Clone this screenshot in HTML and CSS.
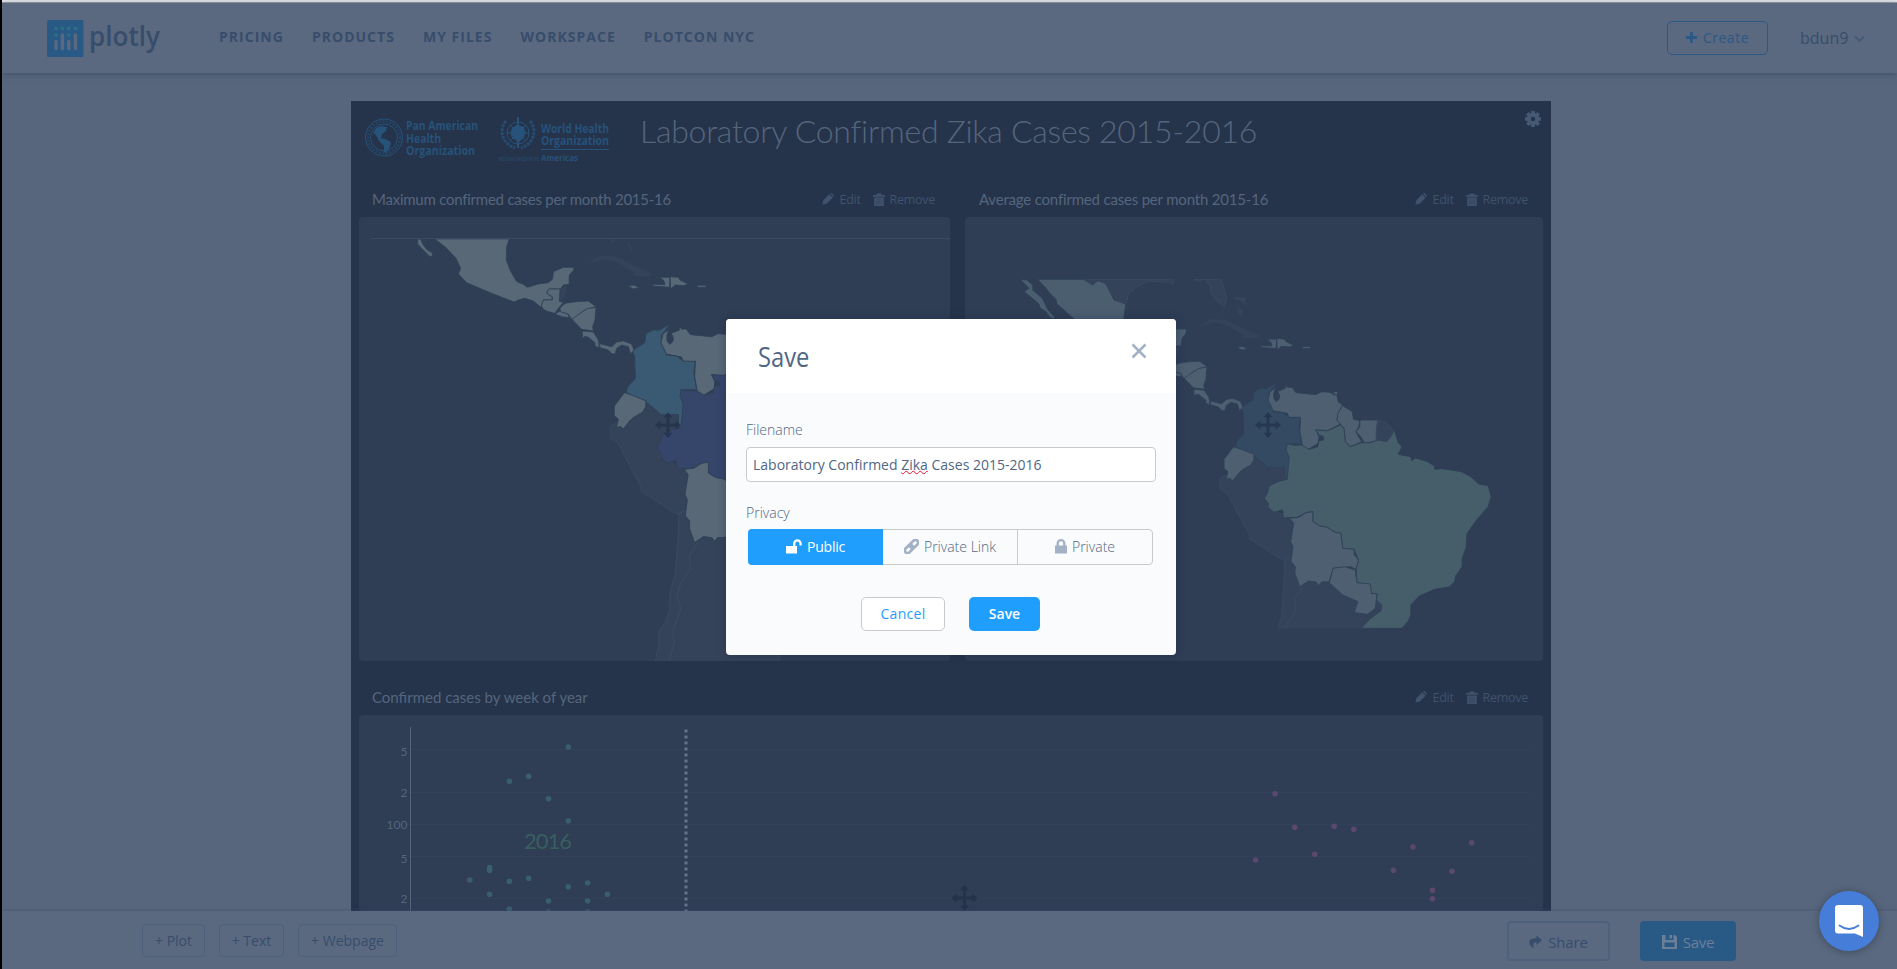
FILE: index.html
```html
<!DOCTYPE html>
<html lang="en">
<head>
<meta charset="utf-8">
<title>plotly dashboard</title>
<link rel="stylesheet" href="styles.css">
</head>
<body>
<svg width="0" height="0" class="defs" aria-hidden="true">
  <defs>
    <symbol id="pencil" viewBox="0 0 12 12"><path d="M.4 11.6 1.2 7.6 7.1 1.3 10.7 4.7 4.6 10.8ZM7.9.6Q9-.5 10.2.6L11.3 1.7Q12.3 2.8 11.3 3.9Z"/></symbol>
    <symbol id="trash" viewBox="0 0 12 13"><path d="M0 2h3.6V.6h4.8V2H12v1.8H0ZM1.2 4.6h9.6V13H1.2Z"/><path d="M3.7 5.8v6M6 5.8v6M8.3 5.8v6" class="slot"/></symbol>
    <symbol id="move" viewBox="0 0 26 26"><path d="M13 0l4.4 5.2h-2.9v6.3h6.3V8.6L26 13l-5.2 4.4v-2.9h-6.3v6.3h2.9L13 26l-4.4-5.2h2.9v-6.3H5.2v2.9L0 13l5.2-4.4v2.9h6.3V5.2H8.6Z"/></symbol>
    <g id="central">
      <path class="land" d="M632 205L650 195 645 232 630 243ZM710 132L750 107 800 110 850 135 910 162 890 170 845 168 855 158 830 145 800 125 765 118ZM775 57L800 60 790 70ZM832 70L838 69 848 88 848 97 840 92Z"/>
      <path class="rest" d="M597 207L630 207 628 244 640 247 628 262 614 280 592 274 580 268 574 258 580 240 607 240 607 230 590 220Z"/>
      <path class="rest" d="M630 264L645 250 680 245 715 243 738 260 710 268 690 280 672 296 664 297 655 282 632 277Z"/>
      <path class="rest" d="M614 282L628 274 655 283 657 293 635 290Z"/>
      <path class="rest" d="M666 298L690 280 712 266 738 262 735 300 728 320 730 333 695 328Z"/>
      <path class="rest" d="M697 333L730 336 745 360 748 383 735 378 735 368 715 352 706 349 697 355Z"/>
      <path class="rest" d="M748 362L752 372 785 380 800 366 820 363 845 372 852 390 842 402 835 380 815 375 800 385 795 402 785 401 775 390 750 383Z"/>
      <path class="rest" d="M835 198L850 195 868 202 850 207ZM930 172L960 172 958 202 910 198 908 193 945 194 942 182ZM960 170L985 172 990 180 1015 192 1000 197 975 195 962 207ZM1042 196h26v6h-26Z"/>
    </g>
    <path id="mexico" class="mx" d="M255 57L478 57 470 80 469 120 480 150 500 185 518 192 533 202 565 192 595 188 608 177 610 155 640 142 672 142 670 152 658 165 657 193 640 195 632 207 597 207 590 218 607 232 605 240 580 240 573 262 550 243 525 235 505 240 492 246 425 220 385 203 350 188 325 162 332 145 318 115 290 85ZM203 57L212 58 220 75 230 88 248 100 246 110 238 108 210 80 203 72Z"/>
    <g id="south">
      <path class="land coast" d="M695 765L680 775 680 808 700 822 735 900 755 940 757 957 830 1010 848 1022 849 1060 840 1190 827 1242 826 1290 815 1325 799 1352 800 1380 790 1440H1100L1070 1225 1100 1172 1090 1122 965 1040 862 895 800 860 856 778V742H805L770 700 712 783Z"/>
      <path class="border" d="M896 1100L875 1135 878 1175 854 1212 845 1248 854 1285 834 1350 838 1380 823 1440M845 1022L862 1010"/>
      <path class="co" d="M830 487L815 508 806 520 806 540 818 545 818 575 845 578 860 592 890 592 886 625 893 672 855 672 856 690 862 720 860 755 852 790 848 765 848 742 805 742 770 708 740 692 720 680 722 665 742 640 740 580 735 562 765 540 768 515 785 505 800 505Z"/>
      <path class="rest" d="M825 503L820 520 820 535 827 545 835 535 835 525 830 514 850 505 850 493 856 502 868 502 878 518 930 524 945 515 965 517 985 525 988 545 1000 555 990 575 985 600 995 612 960 632 930 630 938 650 936 670 910 688 895 680 888 635 890 592 860 592 855 580 818 572 805 540 810 515ZM978 515L988 514 986 524 975 525Z"/>
      <path class="rest" d="M1000 557L1025 575 1028 598 1045 602 1042 620 1035 635 1040 648 1050 665 1020 680 1007 665 1003 625 985 600 988 578Z"/>
      <path class="rest" d="M1045 600L1092 600 1088 640 1090 662 1058 670 1047 650 1035 635 1045 620Z"/>
      <path class="land coast" d="M1092 600L1112 608 1133 632 1115 662 1088 662 1088 630Z"/>
      <path class="br" d="M930 630L960 632 995 615 1003 625 1007 665 1020 680 1050 668 1072 668 1092 660 1115 665 1125 650 1135 630 1145 668 1155 680 1145 703 1178 710 1180 722 1190 714 1220 724 1240 738 1240 748 1260 746 1310 755 1335 770 1355 792 1380 797 1388 830 1380 860 1350 900 1325 940 1322 985 1312 1015 1312 1040 1295 1068 1292 1085 1280 1100 1240 1108 1200 1128 1178 1155 1178 1185 1170 1205 1155 1225 1048 1225 1072 1196 1100 1172 1102 1155 1088 1140 1090 1122 1073 1120 1072 1095 1037 1088 1035 1048 1041 1020 1030 988 1000 985 995 940 980 937 960 922 940 918 922 905 922 875 905 878 880 892 845 893 843 870 820 877 805 862 806 850 795 835 803 820 808 798 830 785 855 778 860 712 852 690 855 672 875 676 893 675 912 688 935 680 938 662 950 660 950 650 938 645Z"/>
      <path class="rest" d="M862 895L885 892 905 878 922 875 922 905 940 918 960 922 980 937 995 940 1000 985 1030 988 1030 1003 1041 1020 1035 1048 1020 1040 975 1045 965 1085 945 1086 937 1097 930 1086 910 1083 888 1100 875 1060 876 1040 865 1025 870 980 864 965 872 910Z"/>
      <path class="rest" d="M975 1045L1005 1040 1033 1050 1037 1088 1072 1092 1075 1120 1090 1122 1085 1165 1065 1183 1030 1178 1040 1145 1000 1125 965 1088Z"/>
      <path class="rest" d="M715 680L740 690 768 703 768 720 760 735 740 748 728 760 712 783 705 775 695 778 700 755 690 745 690 718Z"/>
    </g>
  </defs>
</svg>

<header class="topbar">
  <svg class="brand" width="116" height="40" viewBox="46 18 116 40">
    <rect x="47" y="20" width="36.5" height="37" rx="1.5" class="brand-box"/>
    <path class="brand-bar" d="M56 41.500v7M62.400 35v13.500M68.800 41.500v7M75.400 35v13.500"/>
    <path class="brand-dot" d="M56 28.500h.01M62.400 28.500h.01M68.800 28.500h.01M75.400 28.500h.01M56 35h.01M68.800 35h.01"/>
    <text x="89" y="46" textLength="71" lengthAdjust="spacingAndGlyphs" class="brand-name">plotly</text>
  </svg>
  <nav class="nav"><a>PRICING</a><a>PRODUCTS</a><a>MY FILES</a><a>WORKSPACE</a><a>PLOTCON NYC</a></nav>
  <button class="create"><svg width="11" height="11" viewBox="0 0 11 11"><path d="M5.500 0v11M0 5.500h11"/></svg>Create</button>
  <div class="user">bdun9<svg width="11" height="8" viewBox="0 0 11 8"><path d="M1 1.500 5.500 6 10 1.500"/></svg></div>
</header>

<main class="main">
  <section class="board">
    <div class="board-head">
      <svg class="logos" width="240" height="50" viewBox="364 114 240 50">
        <g class="emblem">
          <circle cx="384" cy="137.500" r="18.500"/><circle cx="384" cy="137.500" r="13.500"/>
          <circle cx="384" cy="137.500" r="16" class="ring-text"/>
          <path class="solid" d="M376 128l5-2 6 1-1 4-4 3-1 4 4 1 6 3-1 5-4 6-2-1 0-6-5-5-3-6-3-2z"/>
          <circle cx="518" cy="133" r="11"/><circle cx="518" cy="133" r="7"/>
          <path d="M507 133h22M518 122v22M510 125l16 16M526 125l-16 16"/>
          <path class="solid" d="M512 128l5-3 7 2 1 6-3 6-4 4-3-4-4-5z"/>
          <path class="wreath" d="M506 121c-7 8-5 22 9 27M530 121c7 8 5 22-9 27"/>
          <path class="staff" d="M518 117v31"/>
          <path d="M541 149.500h68"/>
        </g>
        <g class="logo-text">
          <text x="406" y="130" textLength="72" lengthAdjust="spacingAndGlyphs">Pan American</text>
          <text x="406" y="142.500" textLength="35" lengthAdjust="spacingAndGlyphs">Health</text>
          <text x="406" y="154.500" textLength="69" lengthAdjust="spacingAndGlyphs">Organization</text>
          <text x="541" y="132.500" textLength="68" lengthAdjust="spacingAndGlyphs">World Health</text>
          <text x="541" y="145" textLength="68" lengthAdjust="spacingAndGlyphs">Organization</text>
          <text x="541" y="161" textLength="37" lengthAdjust="spacingAndGlyphs" class="small">Americas</text>
          <text x="499" y="161" textLength="40" lengthAdjust="spacingAndGlyphs" class="tiny">REGIONAL OFFICE FOR THE</text>
        </g>
      </svg>
      <h1>Laboratory Confirmed Zika Cases 2015-2016</h1>
      <svg class="gear" width="16" height="16" viewBox="-8 -8 16 16"><circle r="4.200"/><path d="M0-5.500v-2.500M0 5.500v2.500M-5.500 0h-2.500M5.500 0h2.500M-3.900-3.900l-1.800-1.800M3.900 3.900l1.800 1.800M-3.900 3.900l-1.800 1.800M3.900-3.900l1.800-1.800"/></svg>
    </div>
    <div class="row">
      <article class="card card-max">
        <div class="card-head"><h2 class="t-max">Maximum confirmed cases per month 2015-16</h2><span class="tools"><svg width="12" height="12"><use href="#pencil"/></svg><a>Edit</a><svg width="12" height="13"><use href="#trash"/></svg><a>Remove</a></span></div>
        <svg class="plot map-max" width="591" height="444" viewBox="359 217 591 444">
          <path d="M371 238.500H950" class="frame"/>
          <clipPath id="c1"><rect x="359" y="239" width="591" height="422"/></clipPath>
          <g clip-path="url(#c1)">
            <g transform="matrix(.40583 0 0 .35727 334.230 149.600)"><use href="#south"/></g>
            <g transform="matrix(.33333 0 0 .33333 350 220)"><use href="#mexico"/><use href="#central"/></g>
          </g>
          <use href="#move" x="655" y="412" width="26" height="26" class="move"/>
        </svg>
      </article>
      <article class="card card-avg">
        <div class="card-head"><h2 class="t-avg">Average confirmed cases per month 2015-16</h2><span class="tools"><svg width="12" height="12"><use href="#pencil"/></svg><a>Edit</a><svg width="12" height="13"><use href="#trash"/></svg><a>Remove</a></span></div>
        <svg class="plot map-avg" width="578" height="444" viewBox="965 217 578 444">
          <clipPath id="c2"><rect x="965" y="279" width="578" height="349.500"/></clipPath>
          <g clip-path="url(#c2)">
            <g transform="matrix(.3827 0 0 .33333 960 220)">
              <path class="land coast" d="M325 178L557 178 557 192 545 187 490 183 455 205 440 220 435 250 410 240 380 190 345 195ZM612 178L636 178 625 184ZM640 178L682 178 690 205 697 235 690 262 668 240 655 215 655 200ZM715 235L745 235 742 248 735 240ZM725 262L738 275 735 285 728 278Z"/>
              <path class="mx" d="M203 178L322 178 347 195 360 182 380 190 403 240 433 252 428 297V330H330L298 297 252 250 252 240 235 220 225 205ZM157 178L175 180 190 195 190 210 215 235 230 270 247 290 247 297 235 293 225 275 210 265 205 250 168 215 180 205ZM550 327L592 327 590 342 580 355 578 378 550 378Z"/>
              <use href="#south"/>
            </g>
            <g transform="matrix(.31433 0 0 .311 974.870 285.680)"><use href="#central"/></g>
          </g>
          <use href="#move" x="1255" y="412" width="26" height="26" class="move"/>
        </svg>
      </article>
    </div>
    <article class="card card-week">
      <div class="card-head"><h2 class="t-week">Confirmed cases by week of year</h2><span class="tools"><svg width="12" height="12"><use href="#pencil"/></svg><a>Edit</a><svg width="12" height="13"><use href="#trash"/></svg><a>Remove</a></span></div>
      <svg class="plot scatter" width="1184" height="196" viewBox="359 715 1184 196">
        <path class="grid" d="M411 749.500H1531M411 792.500H1531M411 824.500H1531M411 856.500H1531M411 898.500H1531"/>
        <path class="axis" d="M410.500 727V911"/>
        <path class="dots" d="M686 729.500V911"/>
        <g class="ticks"><text x="407.500" y="755.500">5</text><text x="407.500" y="796.500">2</text><text x="407.500" y="829">100</text><text x="407.500" y="862.500">5</text><text x="407.500" y="902.500">2</text></g>
        <text x="524" y="849" textLength="48" class="year">2016</text>
        <path class="pt teal" d="M568.300 747h.01M509.400 781.300h.01M528.700 776.300h.01M548.500 798.700h.01M568.300 820.700h.01M469.800 880h.01M489.600 867.500v3M509.400 881.300h.01M528.700 878.300h.01M568.300 886.700h.01M587.600 883h.01M607.400 894.300h.01M489.600 894.300h.01M548.500 901h.01M587.600 901h.01M509.400 909h.01M548.500 912h.01M587.600 912h.01"/>
        <path class="pt pink" d="M1275.100 793.700h.01M1294.700 827.300h.01M1334.200 826.300h.01M1353.800 829.300h.01M1412.900 847h.01M1471.600 842.700h.01M1255.600 860h.01M1314.700 854.300h.01M1393.400 870.300h.01M1452 871.300h.01M1432.500 890.300h.01M1432.500 898.700h.01"/>
        <use href="#move" x="951.500" y="885" width="26" height="26" class="move"/>
      </svg>
    </article>
  </section>
</main>

<footer class="bottombar">
  <div class="adders"><button>+ Plot</button><button>+ Text</button><button>+ Webpage</button></div>
  <div class="actions">
    <button class="share"><svg width="13" height="14" viewBox="0 0 13 14"><path d="M7.500.5 13 5.200 7.500 10V7.200C4.500 7.200 3.600 9 5 13.500 1 11 0 8.500.3 6.500.8 4 3.500 3.200 7.500 3.200Z"/></svg>Share</button>
    <button class="save"><svg width="15" height="14" viewBox="0 0 15 14"><path fill-rule="evenodd" d="M0 0h3.500v5h8V0H13l2 2v12H0ZM2.500 7.500v4.500h10V7.500ZM7.500 0H10v3.500H7.500Z"/></svg>Save</button>
  </div>
</footer>

<div class="modal" role="dialog">
  <div class="modal-head"><span class="modal-title">Save</span><svg width="16" height="16" viewBox="0 0 16 16"><path d="M1.500 1.500 14.500 14.500M14.500 1.500 1.500 14.500"/></svg></div>
  <div class="modal-body">
    <label class="l-file">Filename</label>
    <div class="input">Laboratory Confirmed <span class="typo">Zika</span> Cases 2015-2016</div>
    <label class="l-priv">Privacy</label>
    <div class="segments">
      <span class="on"><svg width="16" height="15" viewBox="0 0 16 15"><path d="M0 7h11v7.500H0Z"/><path class="shackle" d="M8.200 7.500V4.500a3.200 3.200 0 0 1 6.400 0V6.500"/></svg>Public</span>
      <span><svg width="15" height="15" viewBox="0 0 15 15"><g class="chain" transform="rotate(-45 7.500 7.500)"><rect x="-.8" y="4.800" width="9.300" height="5.400" rx="2.700"/><rect x="6.500" y="4.800" width="9.300" height="5.400" rx="2.700"/></g></svg>Private Link</span>
      <span><svg width="12" height="15" viewBox="0 0 12 15"><path d="M0 6.500h12V14.500H0Z"/><path class="shackle" d="M2.700 7V4.500a3.300 3.300 0 0 1 6.600 0V7"/></svg>Private</span>
    </div>
    <div class="buttons"><button class="cancel">Cancel</button><button class="ok">Save</button></div>
  </div>
</div>

<div class="chat"><svg width="28" height="32" viewBox="0 0 28 32"><path d="M3 0H25Q28 0 28 3V32L20 28.500H3Q0 28.500 0 25.500V3Q0 0 3 0Z"/><path class="smile" d="M4.500 20.500Q14 27.500 23.500 20.500"/></svg></div>
</body>
</html>
```
FILE: styles.css
```css
* { box-sizing: border-box; }
html, body { height: 100%; }
body {
  margin: 0; display: flex; flex-direction: column; overflow: hidden; position: relative;
  background: #57667d; border-left: 2px solid #000;
  font-family: "Open Sans", sans-serif; color: #374d6b;
}
body::before { content: ""; height: 2px; flex: none; background: #e4e6ea; border-bottom: 1px solid #999fa2; }
h1, h2 { margin: 0; font-weight: 400; white-space: nowrap; }
button { font: inherit; background: none; display: flex; align-items: center; justify-content: center; padding: 0; margin: 0; white-space: nowrap; }
svg { display: block; flex: none; }
.defs { position: absolute; }

.topbar { height: 70px; flex: none; display: flex; align-items: center; padding-left: 44px; background: #5a6980; box-shadow: 0 1px 6px rgba(40, 55, 85, .5); z-index: 1; }
.brand-box { fill: #295a86; }
.brand-bar { stroke: #5a6980; stroke-width: 3.400; stroke-linecap: round; }
.brand-dot { stroke: #2c7285; stroke-width: 3.600; stroke-linecap: round; }
.brand-name { font: 600 27px "Open Sans", sans-serif; fill: #374d6b; }
.nav { display: flex; gap: 28px; margin: -3px 0 0 57px; font-size: 14px; font-weight: 700; letter-spacing: 1.020px; }
.create { width: 101px; height: 34px; margin: 0 32px 0 auto; padding-bottom: 1px; gap: 6px; border: 1px solid #295a86; border-radius: 5px; color: #2b5884; font-size: 14px; letter-spacing: .5px; }
.create path { stroke: #295a86; stroke-width: 2.800; }
.user { display: flex; align-items: center; gap: 6px; width: 97px; font-size: 16px; }
.user svg { margin-top: 2px; }
.user path { fill: none; stroke: #465a76; stroke-width: 1.800; }

.main { flex: 1; min-height: 0; overflow: hidden; }
.board { width: 1200px; height: 860px; margin: 28px 0 0 349px; padding: 0 8px; background: #25344b; }
.board-head { height: 81px; display: flex; align-items: flex-start; padding: 13px 0 0 5px; }
.logos { overflow: visible; }
.emblem { fill: none; stroke: #27527a; stroke-width: 1; }
.emblem .ring-text { stroke-width: 2.500; stroke-dasharray: 2 1.500; opacity: .6; }
.emblem .solid { fill: #27527a; stroke: none; }
.emblem .wreath { stroke-width: 3; stroke-dasharray: 3 1; opacity: .8; }
.emblem .staff { stroke-width: 2; }
.logo-text { fill: #27527a; font: 700 12px "Open Sans", sans-serif; }
.logo-text .small { font-size: 9.500px; }
.logo-text .tiny { font-size: 4.500px; font-weight: 400; }
h1 { margin: -6px 0 0 36px; font: 300 32px/46px Lato, sans-serif; letter-spacing: -.26px; color: #56657c; }
.gear { margin: -3px 2px 0 auto; }
.gear circle { fill: none; stroke: #465a76; stroke-width: 4; }
.gear path { stroke: #465a76; stroke-width: 3.600; }
.row { display: flex; gap: 15px; height: 479px; }
.card-max { width: 591px; }
.card-avg { width: 578px; }
.card-head { height: 35px; display: flex; align-items: center; justify-content: space-between; padding: 0 15px 1px 13px; }
.card-week { padding-top: 19px; }
.card h2 { font: 15px/20px Lato, sans-serif; color: #56657c; }
.card h2.t-max { letter-spacing: -.24px; }
.card h2.t-avg { letter-spacing: -.19px; padding-left: 1px; }
.tools { display: flex; align-items: center; font-size: 12.500px; color: #40526d; fill: #40526d; }
.tools a { margin: 0 12px 0 5px; letter-spacing: -.28px; }
.tools a:last-child { margin-right: 0; }
.slot { stroke: #25344b; stroke-width: .6; opacity: .6; }
.plot { background: #2f3d55; border-radius: 4px; }
.map-max { --rest: #586877; --mx: #586877; --co: #3a5a73; --br: #36466b; }
.map-avg { --rest: #4d5f70; --mx: #4b5e70; --co: #344a63; --br: #465d6a; }
.frame { stroke: #3d4b62; }
.land { fill: #35435a; }
.coast { stroke: #3a485f; stroke-width: 3; }
.border { fill: none; stroke: #3c4a61; stroke-width: 3; }
.rest, .mx, .co, .br { stroke: #2f4258; stroke-width: 2.500; stroke-linejoin: round; }
.rest { fill: var(--rest); }
.mx { fill: var(--mx); }
.co { fill: var(--co); }
.br { fill: var(--br); }
.move { fill: #1d2c44; opacity: .6; }
.grid { stroke: #33425a; }
.axis { stroke: #56657c; }
.dots { stroke: #66748a; stroke-width: 3; stroke-dasharray: 3 3; }
.ticks { fill: #56657c; text-anchor: end; font: 12px Lato, sans-serif; }
.year { fill: #385f60; font: 22px Lato, sans-serif; }
.pt { stroke-width: 5.600; stroke-linecap: round; }
.teal { stroke: #385e70; }
.pink { stroke: #5a486f; }

.bottombar { height: 58px; flex: none; display: flex; justify-content: space-between; padding: 10px 161px 0 140px; background: #5a6980; box-shadow: 0 -1px 3px rgba(60, 75, 105, .4); z-index: 1; }
.adders { display: flex; gap: 14px; padding-top: 3px; font-size: 14px; }
.adders button { height: 33px; width: 63px; border: 1px solid #4e607b; border-radius: 4px; color: #374d6b; }
.adders button:nth-child(2) { width: 65px; }
.adders button:nth-child(3) { width: 99px; }
.actions { display: flex; gap: 30px; }
.actions button { height: 40px; gap: 6px; padding-top: 2px; border-radius: 4px; font-size: 15px; letter-spacing: -.2px; }
.share { width: 103px; border: 2px solid #4e607b; color: #374d6b; fill: #374d6b; }
.save { width: 96px; border: 0; background: #295a86; color: #6b7f96; fill: #6b7f96; }

.modal { position: absolute; left: 724px; top: 319px; width: 450px; height: 336px; border-radius: 4px; background: #fafbfd; overflow: hidden; z-index: 2; box-shadow: 0 0 8px rgba(20, 35, 60, .35); color: #506784; }
.modal-head { height: 74px; display: flex; justify-content: space-between; background: #fff; padding: 17px 29px 0 32px; }
.modal-title { font-size: 27px; line-height: 42px; transform: scaleX(.88); transform-origin: left; }
.modal-head svg { margin-top: 7px; }
.modal-head path { stroke: #a2b1c6; stroke-width: 2.500; }
.modal-body { padding: 27px 20px 0; font-size: 14px; }
label { display: block; font-weight: 300; line-height: 20px; }
.input { height: 35px; margin: 7px 0 21px; padding: 0 6px; border: 1px solid #c8cacd; border-radius: 4px; background: #fff; line-height: 33px; }
.typo { text-decoration: underline wavy #f01030 1px; text-underline-offset: 0; text-decoration-skip-ink: none; }
.segments { display: flex; width: 405px; height: 36px; margin: 6px 0 0 2px; border: 1px solid #c8cacd; border-radius: 4px; font-weight: 300; fill: #a2b1c6; }
.segments span { flex: 1; display: flex; align-items: center; justify-content: center; gap: 5px; padding-bottom: 2px; }
.segments span + span + span { border-left: 1px solid #c8cacd; }
.segments .on { flex: none; width: 135px; margin: -1px 0 -1px -1px; background: #1f9efe; color: #fff; fill: #fff; border-radius: 4px 0 0 4px; font-weight: 400; letter-spacing: -.2px; }
.shackle { fill: none; stroke: #a2b1c6; stroke-width: 2.300; }
.on .shackle { stroke: #fff; }
.chain { fill: none; stroke: #a2b1c6; stroke-width: 2.800; }
.buttons { display: flex; justify-content: center; gap: 24px; margin: 32px 1px 0 0; }
.buttons button { height: 34px; padding-bottom: 2px; border-radius: 5px; }
.cancel { width: 84px; border: 1px solid #c8cacd; background: #fff; color: #1f9efe; letter-spacing: .3px; }
.ok { width: 71px; border: 0; background: #1f9efe; color: #fff; font-weight: 600; }

.chat { position: absolute; left: 1817px; top: 891px; width: 60px; height: 60px; border-radius: 50%; background: #457dd8; box-shadow: 0 1px 8px rgba(0, 0, 0, .3); display: flex; align-items: center; justify-content: center; z-index: 3; }
.chat path { fill: #fff; }
.chat .smile { fill: none; stroke: #457dd8; stroke-width: 1.800; stroke-linecap: round; }
```
